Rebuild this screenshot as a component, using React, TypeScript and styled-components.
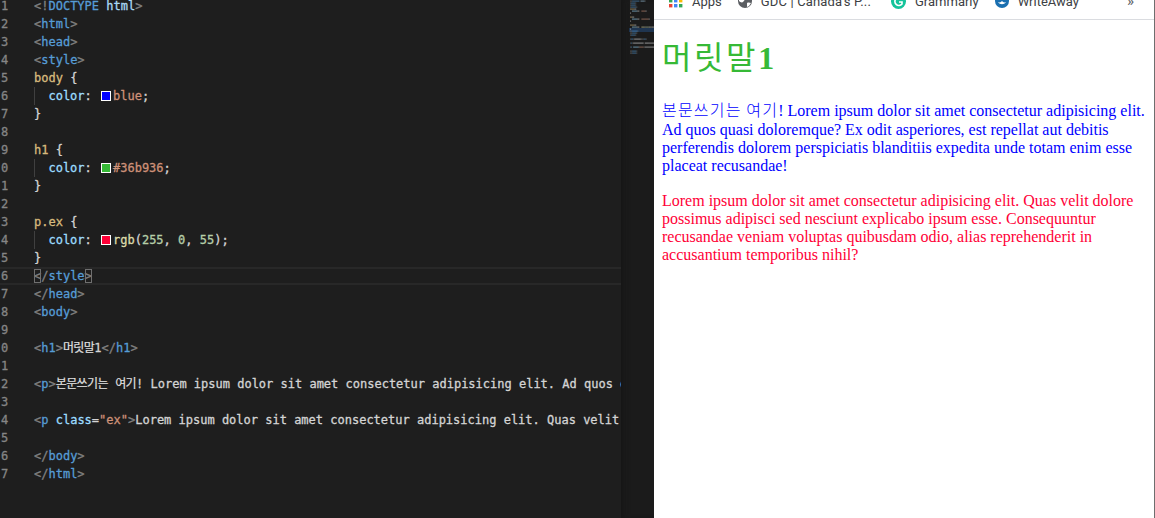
import React from "react";
import styled, { createGlobalStyle } from "styled-components";

const Global = createGlobalStyle`
  html, body { margin: 0; padding: 0; height: 100%; overflow: hidden; background: #1e1e1e; }
  #root { height: 100%; }
`;

type Kind = "punc" | "tag" | "doc" | "sel" | "text" | "prop" | "val" | "num" | "fn" | "cjk" | "sp";

const colors: Record<Kind, string> = {
  punc: "#808080",
  tag: "#569cd6",
  doc: "#a9d8f5",
  sel: "#d7ba7d",
  text: "#d4d4d4",
  prop: "#9cdcfe",
  val: "#ce9178",
  num: "#b5cea8",
  fn: "#dcdcaa",
  cjk: "#e2e2e2",
  sp: "#d4d4d4",
};

type Tok = [Kind, string] | { swatch: string } | { guide: true };

const sw = (c: string): Tok => ({ swatch: c });
const guide: Tok = { guide: true };

const P1 =
  " Lorem ipsum dolor sit amet consectetur adipisicing elit. Ad quos quasi doloremque? Ex odit asperiores, est repellat aut debitis";
const P2 =
  "Lorem ipsum dolor sit amet consectetur adipisicing elit. Quas velit dolore possimus adipisci sed nesciunt explicabo ipsum esse.";

const lines: Tok[][] = [
  [["punc", "<!"], ["tag", "DOCTYPE"], ["sp", " "], ["doc", "html"], ["punc", ">"]],
  [["punc", "<"], ["tag", "html"], ["punc", ">"]],
  [["punc", "<"], ["tag", "head"], ["punc", ">"]],
  [["punc", "<"], ["tag", "style"], ["punc", ">"]],
  [["sel", "body"], ["sp", " {"]],
  [guide, ["prop", "color"], ["sp", ": "], sw("#0000ff"), ["val", "blue"], ["sp", ";"]],
  [["sp", "}"]],
  [],
  [["sel", "h1"], ["sp", " {"]],
  [guide, ["prop", "color"], ["sp", ": "], sw("#36b936"), ["val", "#36b936"], ["sp", ";"]],
  [["sp", "}"]],
  [],
  [["sel", "p.ex"], ["sp", " {"]],
  [guide, ["prop", "color"], ["sp", ": "], sw("#ff0037"), ["fn", "rgb"], ["sp", "("], ["num", "255"], ["sp", ", "], ["num", "0"], ["sp", ", "], ["num", "55"], ["sp", ");"]],
  [["sp", "}"]],
  [["punc", "</"], ["tag", "style"], ["punc", ">"]],
  [["punc", "</"], ["tag", "head"], ["punc", ">"]],
  [["punc", "<"], ["tag", "body"], ["punc", ">"]],
  [],
  [["punc", "<"], ["tag", "h1"], ["punc", ">"], ["cjk", "머릿말"], ["text", "1"], ["punc", "</"], ["tag", "h1"], ["punc", ">"]],
  [],
  [["punc", "<"], ["tag", "p"], ["punc", ">"], ["cjk", "본문쓰기는"], ["text", " "], ["cjk", "여기"], ["text", "!" + P1]],
  [],
  [["punc", "<"], ["tag", "p"], ["sp", " "], ["prop", "class"], ["sp", "="], ["val", '"ex"'], ["punc", ">"], ["text", P2]],
  [],
  [["punc", "</"], ["tag", "body"], ["punc", ">"]],
  [["punc", "</"], ["tag", "html"], ["punc", ">"]],
];

const ACTIVE = 15;

const Screen = styled.div`
  display: flex;
  width: 1155px;
  height: 518px;
  overflow: hidden;
`;

const Editor = styled.div`
  width: 621px;
  flex: none;
  height: 100%;
  overflow: hidden;
  background: #1e1e1e;
`;

const Code = styled.div`
  margin-top: -3px;
  font-family: "DejaVu Sans Mono", monospace;
  font-size: 12px;
  -webkit-text-stroke: 0.3px currentColor;
`;

const Row = styled.div<{ $active?: boolean }>`
  display: flex;
  box-sizing: border-box;
  height: 18px;
  line-height: ${(p) => (p.$active ? "14px" : "18px")};
  white-space: pre;
  border-top: ${(p) => (p.$active ? "2px solid #282828" : "0")};
  border-bottom: ${(p) => (p.$active ? "2px solid #282828" : "0")};
`;

const LineNo = styled.div`
  flex: none;
  width: 34px;
  padding-left: 1px;
  box-sizing: border-box;
  color: #858585;
`;

const Content = styled.div`
  flex: 1;
  min-width: 0;
  overflow: hidden;
  position: relative;
`;

const Span = styled.span<{ $k: Kind }>`
  color: ${(p) => colors[p.$k]};
  ${(p) =>
    p.$k === "cjk"
      ? `font-family: "Noto Sans CJK KR", sans-serif; letter-spacing: -0.6px; line-height: 0; -webkit-text-stroke: 0.15px currentColor;`
      : ""}
`;

const Guide = styled.span`
  display: inline-block;
  width: 14.44px;
  height: 18px;
  vertical-align: top;
  box-sizing: border-box;
  border-left: 1px solid #404040;
`;

const Swatch = styled.span<{ $c: string }>`
  display: inline-block;
  box-sizing: border-box;
  width: 10px;
  height: 10px;
  margin: 0 2.4px 0 1.6px;
  vertical-align: -1px;
  background: ${(p) => p.$c};
  border: 1px solid #fff;
`;

const BracketBox = styled.span<{ $l: number }>`
  position: absolute;
  top: 0;
  left: ${(p) => p.$l}px;
  width: 7.22px;
  height: 14px;
  box-sizing: border-box;
  border: 1px solid #6f6f6f;
`;

const Minimap = styled.div`
  width: 33px;
  flex: none;
  height: 100%;
  background: #1b1b1b;
  box-shadow: inset 6px 0 6px -4px #161616;
`;

const MiniSvg = styled.svg`
  display: block;
  filter: blur(0.4px);
`;

const Browser = styled.div`
  flex: 1;
  min-width: 0;
  height: 100%;
  background: #fff;
  display: flex;
  flex-direction: column;
  box-sizing: border-box;
  border-right: 1px solid #6e6e6e;
`;

const BookmarkBar = styled.div`
  height: 20px;
  flex: none;
  box-sizing: border-box;
  border-bottom: 1px solid #dadce0;
  overflow: hidden;
`;

const BookmarkRow = styled.div`
  display: flex;
  align-items: center;
  height: 16px;
  margin-top: -7px;
  padding-left: 15px;
  gap: 16px;
  font-family: Roboto, "Liberation Sans", sans-serif;
  font-size: 13px;
  color: #3c4043;
`;

const Bookmark = styled.div<{ $wide?: boolean }>`
  display: flex;
  align-items: center;
  gap: 9px;
  white-space: nowrap;
  ${(p) => (p.$wide ? "letter-spacing: 0.15px; margin-right: 4px;" : "")}
`;

const More = styled.div`
  margin-left: auto;
  margin-right: 20px;
  color: #5f6368;
  font-size: 15px;
`;

const Page = styled.div`
  flex: 1;
  padding: 0 7px 0 8px;
  font-family: "Liberation Serif", "Noto Sans CJK KR", serif;
  font-size: 16px;
  line-height: 18px;
  color: #0000ff;
`;

const Heading = styled.h1`
  margin: 17px 0 25px;
  font-size: 32px;
  line-height: 37px;
  font-weight: bold;
  color: #36b936;
`;

const HeadKo = styled.span`
  font-weight: normal;
  font-family: "Noto Sans CJK KR", sans-serif;
  letter-spacing: 2.6px;
`;

const Para = styled.p<{ $red?: boolean }>`
  margin: 0 0 17px;
  ${(p) => (p.$red ? "color: #ff0037;" : "")}
`;

const ParaKo = styled.span`
  font-family: "Noto Sans CJK KR", sans-serif;
  font-weight: 300;
  letter-spacing: 1.2px;
  line-height: 0;
  &::after {
    content: "";
    display: inline-block;
    height: 0;
    vertical-align: -4.6px;
  }
`;

function Mini() {
  const rects: React.ReactNode[] = [];
  lines.forEach((toks, i) => {
    let x = 9;
    toks.forEach((t, j) => {
      if (Array.isArray(t)) {
        const w = (t[1].length * (t[0] === "cjk" ? 2 : 1)) * 1.05;
        if (t[1].trim()) {
          rects.push(
            <rect key={`${i}-${j}`} x={x} y={i * 2 + 0.5} width={w} height={1.2} fill={colors[t[0]]} opacity={0.5} />
          );
        }
        x += w;
      } else {
        x += 2;
      }
    });
  });
  return (
    <MiniSvg width="33" height="60" viewBox="0 0 33 60">
      <rect x="8" y={ACTIVE * 2 - 2} width="25" height="4" fill="#1f3550" />
      {rects}
    </MiniSvg>
  );
}

const AppsIcon = () => {
  const c = ["#34a853", "#ea4335", "#fbbc05", "#34a853", "#4285f4", "#fbbc05", "#ea4335", "#4285f4", "#34a853"];
  return (
    <svg width="14" height="14" viewBox="0 0 14 14">
      {c.map((f, i) => (
        <rect key={i} x={(i % 3) * 5} y={Math.floor(i / 3) * 5} width="3.4" height="3.4" fill={f} />
      ))}
    </svg>
  );
};

const GlobeIcon = () => (
  <svg width="14" height="14" viewBox="0 0 14 14">
    <circle cx="7" cy="7" r="7" fill="#5a5d61" />
    <path d="M1 4c2-1 3-1 5 0s0 3-1 4-3 0-4-1zM9 9c2-1 3 0 4 0l-2 3-2 1z" fill="#fff" />
  </svg>
);

const GrammarlyIcon = () => (
  <svg width="15" height="15" viewBox="0 0 15 15">
    <circle cx="7.5" cy="7.5" r="7.5" fill="#15c39a" />
    <path d="M11 5a4 4 0 1 0 0 5V8H8" fill="none" stroke="#fff" strokeWidth="1.6" />
  </svg>
);

const WriteAwayIcon = () => (
  <svg width="14" height="14" viewBox="0 0 14 14">
    <circle cx="7" cy="7" r="7" fill="#1a6fb0" />
    <path d="M3 8c2 3 6 3 8 0-2 1-3 0-4-1-1 1-2 2-4 1z" fill="#fff" />
  </svg>
);

const lastDigit = (n: number) => String(n % 10);

export default function App() {
  return (
    <>
      <Global />
      <Screen>
        <Editor>
          <Code>
            {lines.map((toks, i) => (
              <Row key={i} $active={i === ACTIVE}>
                <LineNo>{lastDigit(i + 1)}</LineNo>
                <Content>
                  {toks.map((t, j) =>
                    Array.isArray(t) ? (
                      <Span key={j} $k={t[0]}>{t[1]}</Span>
                    ) : "swatch" in t ? (
                      <Swatch key={j} $c={t.swatch} />
                    ) : (
                      <Guide key={j} />
                    )
                  )}
                  {i === ACTIVE && (
                    <>
                      <BracketBox $l={0} />
                      <BracketBox $l={50.5} />
                    </>
                  )}
                </Content>
              </Row>
            ))}
          </Code>
        </Editor>
        <Minimap>
          <Mini />
        </Minimap>
        <Browser>
          <BookmarkBar>
            <BookmarkRow>
              <Bookmark><AppsIcon />Apps</Bookmark>
              <Bookmark $wide><GlobeIcon />GDC | Canada's P...</Bookmark>
              <Bookmark><GrammarlyIcon />Grammarly</Bookmark>
              <Bookmark><WriteAwayIcon />WriteAway</Bookmark>
              <More>»</More>
            </BookmarkRow>
          </BookmarkBar>
          <Page>
            <Heading><HeadKo>머릿말</HeadKo>1</Heading>
            <Para>
              <ParaKo>본문쓰기는 여기</ParaKo>! Lorem ipsum dolor sit amet consectetur adipisicing elit. Ad quos quasi doloremque? Ex odit asperiores, est repellat aut debitis perferendis dolorem perspiciatis blanditiis expedita unde totam enim esse placeat recusandae!
            </Para>
            <Para $red>
              Lorem ipsum dolor sit amet consectetur adipisicing elit. Quas velit dolore possimus adipisci sed nesciunt explicabo ipsum esse. Consequuntur recusandae veniam voluptas quibusdam odio, alias reprehenderit in accusantium temporibus nihil?
            </Para>
          </Page>
        </Browser>
      </Screen>
    </>
  );
}
